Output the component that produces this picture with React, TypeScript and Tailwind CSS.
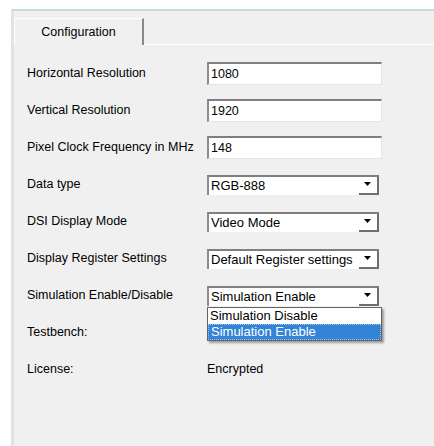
import { ReactNode } from 'react';

const font = { fontFamily: '"Liberation Sans", Arial, sans-serif' };

function TextBox({ value }: { value: string }) {
  return (
    <div className="h-[23px] w-[175px] bg-white border-t-2 border-l-2 border-t-[#7f7f7f] border-l-[#8c8c8c] border-r border-b border-r-[#e4e4e4] border-b-[#e4e4e4] pl-[2px] flex items-center text-[12.5px] text-black">
      {value}
    </div>
  );
}

function Combo({ value, children }: { value: string; children?: ReactNode }) {
  return (
    <div className="relative">
      <div className="h-[20px] w-[172px] bg-white border-t-2 border-l-2 border-t-[#7f7f7f] border-l-[#8c8c8c] flex items-center text-[13px] text-black">
        <span className="flex-1 pl-[2px] whitespace-nowrap overflow-hidden">{value}</span>
        <div className="h-full w-[20px] shrink-0 bg-white border-r-2 border-b-2 border-r-[#6e6e6e] border-b-[#6e6e6e] flex items-center justify-center">
          <svg width="8" height="5" viewBox="0 0 8 5">
            <path d="M0 0H7L3.5 4Z" fill="#000" />
          </svg>
        </div>
      </div>
      {children}
    </div>
  );
}

function Row({ label, children }: { label: string; children?: ReactNode }) {
  return (
    <div className="h-[37px] flex items-center">
      <div className="w-[180px] shrink-0 text-[12.5px] text-black whitespace-nowrap">{label}</div>
      {children}
    </div>
  );
}

export default function App() {
  return (
    <div className="w-[434px] h-[446px] bg-white pl-[11px] pt-[9px] flex" style={font}>
      <div className="flex-1 flex flex-col bg-[#f0f0f0] border-l-[3px] border-l-[#e3e3e3] border-t-2 border-t-[#c3dcdc]">
        <div className="flex pt-[7px]">
          <div className="h-[27px] w-[130px] border-t border-l border-white border-r-2 border-r-[#8a8a8a] flex items-center justify-center text-[12.5px] text-black">
            Configuration
          </div>
          <div className="flex-1 border-b border-white" />
        </div>

        <div className="pl-[13px] pt-[10px] flex flex-col">
          <Row label="Horizontal Resolution">
            <TextBox value="1080" />
          </Row>
          <Row label="Vertical Resolution">
            <TextBox value="1920" />
          </Row>
          <Row label="Pixel Clock Frequency in MHz">
            <TextBox value="148" />
          </Row>
          <Row label="Data type">
            <Combo value="RGB-888" />
          </Row>
          <Row label="DSI Display Mode">
            <Combo value="Video Mode" />
          </Row>
          <Row label="Display Register Settings">
            <Combo value="Default Register settings" />
          </Row>
          <Row label="Simulation Enable/Disable">
            <Combo value="Simulation Enable">
              {/* open dropdown list */}
              <div className="absolute left-0 top-[21px] w-[175px] bg-white border border-[#646464] shadow-[2px_2px_2px_rgba(0,0,0,0.35)] text-[13px] leading-none z-10">
                <div className="h-[16px] pl-[2px] flex items-center text-black">Simulation Disable</div>
                <div className="h-[16px] pl-[2px] flex items-center bg-[#3383d6] text-white border border-dotted border-[#9cc4ee]">
                  Simulation Enable
                </div>
              </div>
            </Combo>
          </Row>
          <Row label="Testbench:" />
          <Row label="License:">
            <span className="text-[12.5px] text-black">Encrypted</span>
          </Row>
        </div>
      </div>
    </div>
  );
}
